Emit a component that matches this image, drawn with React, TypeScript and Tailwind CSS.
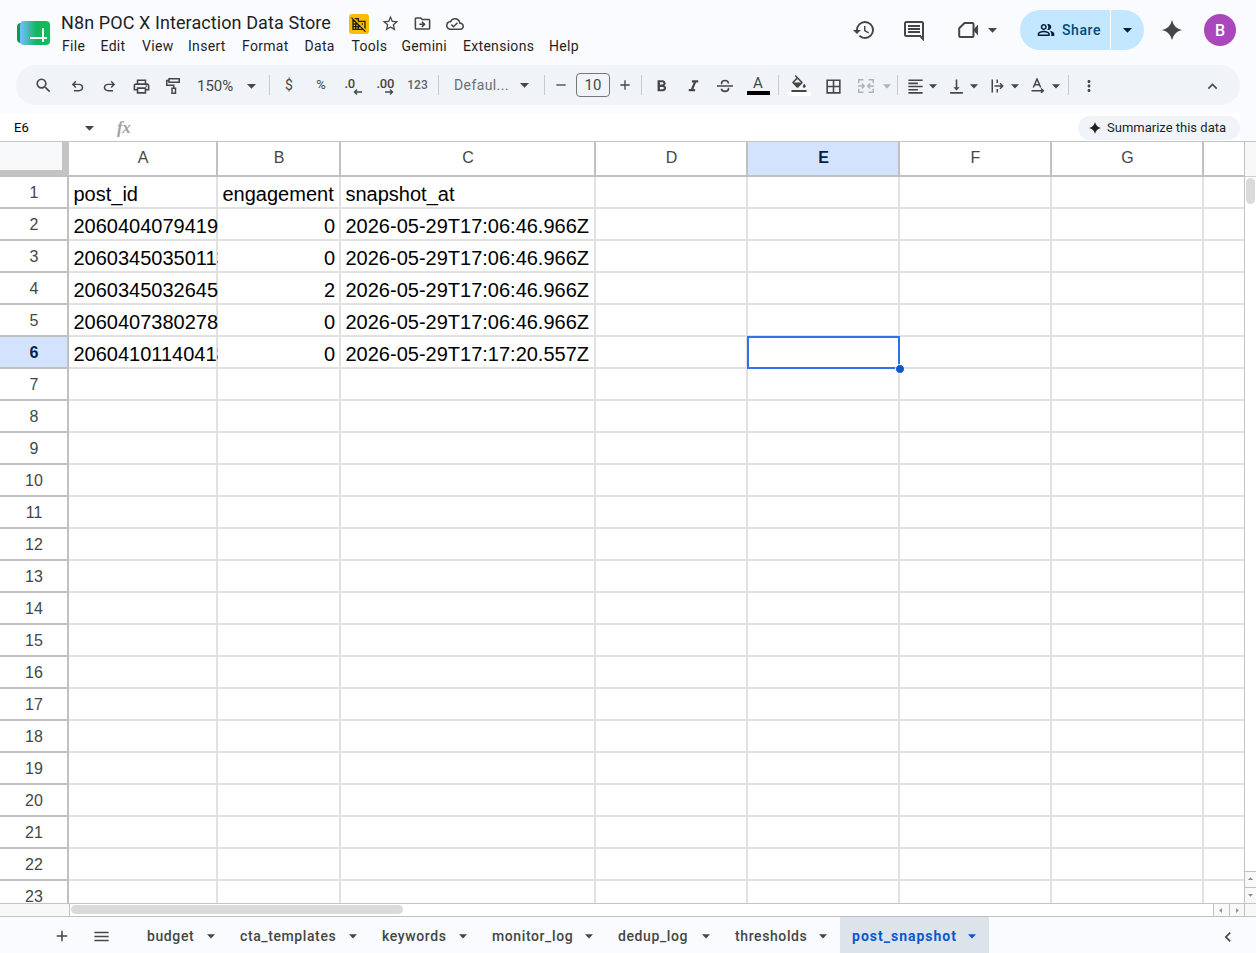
import type { ReactNode } from "react";
import {
  MdAdd,
  MdBorderAll,
  MdDomainDisabled,
  MdFormatAlignLeft,
  MdFormatBold,
  MdFormatColorFill,
  MdFormatItalic,
  MdHistory,
  MdKeyboardArrowLeft,
  MdKeyboardArrowUp,
  MdMenu,
  MdMoreVert,
  MdOutlineCloudDone,
  MdOutlineDriveFileMove,
  MdOutlinePeopleAlt,
  MdOutlinePrint,
  MdRemove,
  MdSearch,
  MdStarBorder,
  MdStrikethroughS,
  MdVerticalAlignBottom,
} from "react-icons/md";

const MENUS = [
  { label: "File", width: "w-[38.5px]" },
  { label: "Edit", width: "w-[41.5px]" },
  { label: "View", width: "w-[46px]" },
  { label: "Insert", width: "w-[54px]" },
  { label: "Format", width: "w-[62.5px]" },
  { label: "Data", width: "w-[47px]" },
  { label: "Tools", width: "w-[50px]" },
  { label: "Gemini", width: "w-[61.5px]" },
  { label: "Extensions", width: "w-[86px]" },
  { label: "Help", width: "w-[40px]" },
];

const COLUMNS = [
  { name: "A", width: "w-[149px]" },
  { name: "B", width: "w-[123px]" },
  { name: "C", width: "w-[255px]" },
  { name: "D", width: "w-[152px]" },
  { name: "E", width: "w-[152px]" },
  { name: "F", width: "w-[152px]" },
  { name: "G", width: "w-[152px]" },
];

const DATA = [
  ["post_id", "engagement", "snapshot_at"],
  ["2060404079419", "0", "2026-05-29T17:06:46.966Z"],
  ["20603450350113", "0", "2026-05-29T17:06:46.966Z"],
  ["2060345032645", "2", "2026-05-29T17:06:46.966Z"],
  ["2060407380278", "0", "2026-05-29T17:06:46.966Z"],
  ["20604101140418", "0", "2026-05-29T17:17:20.557Z"],
];

const TABS = [
  { name: "budget", width: "w-[93px]" },
  { name: "cta_templates", width: "w-[142px]" },
  { name: "keywords", width: "w-[110px]" },
  { name: "monitor_log", width: "w-[126px]" },
  { name: "dedup_log", width: "w-[117px]" },
  { name: "thresholds", width: "w-[117px]" },
  { name: "post_snapshot", width: "w-[149px]", active: true },
];

const SELECTED = { row: 6, col: "E" };

const Caret = ({ className = "" }: { className?: string }) => (
  <svg width="9" height="5" viewBox="0 0 9 5" className={`shrink-0 ${className}`}>
    <path d="M0 0h9L4.5 4.7z" fill="currentColor" />
  </svg>
);

const Spark = ({ size }: { size: number }) => (
  <svg width={size} height={size} viewBox="0 0 20 20" className="shrink-0">
    <path d="M10 0Q11.8 8.2 20 10Q11.8 11.8 10 20Q8.2 11.8 0 10Q8.2 8.2 10 0z" fill="currentColor" />
  </svg>
);

const SheetsLogo = () => (
  <svg width="34" height="26" viewBox="0 0 34 26">
    <defs>
      <linearGradient id="logo" x1="0" x2="1">
        <stop offset="0.05" stopColor="#6fbcfa" />
        <stop offset="0.55" stopColor="#12b65c" />
        <stop offset="1" stopColor="#10bd5b" />
      </linearGradient>
    </defs>
    <rect x="0" y="3" width="20" height="20" rx="4" fill="#0b9b50" />
    <rect x="3" y="1" width="30" height="24" rx="4" fill="url(#logo)" />
    <path d="M13 18h17M26 8v14" stroke="#fff" strokeWidth="2" />
  </svg>
);

const Sep = ({ className }: { className: string }) => (
  <div className={`h-5 w-px shrink-0 bg-[#c7c9cc] ${className}`} />
);

const Slot = ({ className = "w-8", children }: { className?: string; children: ReactNode }) => (
  <div className={`flex h-full shrink-0 items-center justify-center ${className}`}>{children}</div>
);

const Decimal = ({ text, right }: { text: string; right?: boolean }) => (
  <div className="flex w-[17px] flex-col leading-none">
    <span className="text-[13px] leading-[11px] font-medium tracking-[-0.3px]">{text}</span>
    <svg width="9" height="6" viewBox="0 0 9 6" className="self-end">
      <path
        d={right ? "M0 3h7.500M5 0.500L7.500 3L5 5.500" : "M9 3H1.500M4 0.500L1.500 3L4 5.500"}
        fill="none"
        stroke="currentColor"
        strokeWidth="1.4"
      />
    </svg>
  </div>
);

const Header = () => (
  <header className="flex h-[65px] shrink-0 items-start">
    <div className="mt-5 ml-[17px] w-[44px] shrink-0">
      <SheetsLogo />
    </div>
    <div className="w-[794px]">
      <div className="flex h-[37px] items-center pt-2.5">
        <h1 className="-mt-0.5 w-[288px] text-[18px] leading-6 tracking-[0.09px] whitespace-nowrap text-[#1f1f1f]">
          N8n POC X Interaction Data Store
        </h1>
        <div className="flex size-5 items-center justify-center rounded-[3px] bg-[#fbbc04] text-[#1f1f1f]">
          <MdDomainDisabled size={16} />
        </div>
        <MdStarBorder size={19} className="ml-3" />
        <MdOutlineDriveFileMove size={19} className="ml-[13px]" />
        <MdOutlineCloudDone size={18} className="ml-[14px]" />
      </div>
      <nav className="flex pl-px text-[14px] leading-[18px] tracking-[0.3px] text-[#1f1f1f]">
        {MENUS.map((m) => (
          <span key={m.label} className={`shrink-0 whitespace-nowrap ${m.width}`}>
            {m.label}
          </span>
        ))}
      </nav>
    </div>
    <div className="mt-2.5 flex h-10 items-center">
      <MdHistory size={24} className="-ml-[3px]" />
      <svg width="20" height="20" viewBox="0 0 20 20" className="mt-0.5 ml-[28px]">
        <path
          d="M19 18V2.500A1.500 1.500 0 0 0 17.500 1h-15A1.500 1.500 0 0 0 1 2.500v11A1.500 1.500 0 0 0 2.500 15h13.700z"
          fill="none"
          stroke="currentColor"
          strokeWidth="2"
        />
        <path d="M4 5h12M4 8h12M4 11h12" stroke="currentColor" strokeWidth="1.800" />
      </svg>
      <svg width="22" height="18" viewBox="0 0 22 18" className="ml-[34px]">
        <path
          d="M6.500 2h8a1 1 0 0 1 1 1v12a1 1 0 0 1-1 1H2.200a1 1 0 0 1-1-1V7.300z"
          fill="none"
          stroke="currentColor"
          strokeWidth="2"
          strokeLinejoin="round"
        />
        <path d="M15 9l5-5.500v11z" fill="currentColor" />
      </svg>
      <Caret className="ml-2" />
      <div className="ml-[23px] flex h-10 w-[124px] overflow-hidden rounded-full bg-[#c2e7ff] text-[#001d35]">
        <div className="flex w-[90px] items-center pl-[17px]">
          <MdOutlinePeopleAlt size={18} />
          <span className="ml-[7px] text-[14px] font-medium tracking-[0.6px] text-[#004a77]">Share</span>
        </div>
        <div className="w-px bg-white" />
        <div className="flex flex-1 items-center pl-[12px]">
          <Caret />
        </div>
      </div>
      <div className="ml-[18px]">
        <Spark size={20} />
      </div>
      <div className="ml-[22px] flex size-8 items-center justify-center rounded-full bg-[#ab47bc] pt-0.5 text-[16px] font-medium text-white">
        B
      </div>
    </div>
  </header>
);

const Toolbar = () => (
  <div className="mx-4 flex h-10 shrink-0 items-center rounded-full bg-[#f0f4f9] pl-2.5">
    <Slot className="w-[34px]"><MdSearch size={19} /></Slot>
    <Slot className="ml-px w-8 pt-0.5">
      <svg width="17" height="17" viewBox="0 -960 960 960" fill="currentColor">
        <path d="M280-200v-80h284q63 0 109.500-40T720-420q0-60-46.500-100T564-560H312l104 104-56 56-200-200 200-200 56 56-104 104h252q97 0 169.500 63T806-420q0 94-72.500 157T564-200H280Z" />
      </svg>
    </Slot>
    <Slot className="w-8 pt-0.5">
      <svg width="17" height="17" viewBox="0 -960 960 960" fill="currentColor">
        <path d="M396-200q-97 0-169.500-63T154-420q0-94 72.500-157T396-640h252L544-744l56-56 200 200-200 200-56-56 104-104H396q-63 0-109.500 40T240-420q0 60 46.500 100T396-280h284v80H396Z" />
      </svg>
    </Slot>
    <Slot className="w-8 pt-0.5"><MdOutlinePrint size={19} /></Slot>
    <Slot className="w-[31px] pt-0.5">
      <svg width="16" height="18" viewBox="0 0 16 18" fill="none" stroke="currentColor" strokeWidth="1.500">
        <path d="M4 1.750h10.250v3.500H4zM4 3.500H1.750v4.750h7v3M7 11.250h3.500v5H7z" />
      </svg>
    </Slot>
    <span className="w-[56px] pt-0.5 pl-[9px] text-[15px]">150%</span>
    <Slot className="w-4 pt-0.5 pr-px"><Caret /></Slot>
    <Sep className="mr-[3px] ml-[9px]" />
    <Slot><span className="text-[14px]">$</span></Slot>
    <Slot><span className="text-[13px]">%</span></Slot>
    <Slot className="w-8 pt-0.5"><Decimal text=".0" /></Slot>
    <Slot className="w-8 pt-0.5"><Decimal text=".00" right /></Slot>
    <Slot className="w-[33px]"><span className="text-[12px] font-medium text-[#5f6368]">123</span></Slot>
    <Sep className="ml-1" />
    <span className="w-[76px] pl-[15px] text-[14px] tracking-[0.4px] text-[#6b6e70]">Defaul...</span>
    <Slot className="w-5 pr-px"><Caret /></Slot>
    <Sep className="ml-[9px]" />
    <Slot className="w-[31px]"><MdRemove size={16} /></Slot>
    <div className="flex h-6 w-[34px] items-center justify-center rounded-[4px] border border-[#747775] text-[15px]">10</div>
    <Slot className="w-[30px]"><MdAdd size={16} /></Slot>
    <Sep className="ml-px" />
    <Slot className="ml-[3px] w-8 pt-0.5"><MdFormatBold size={19} /></Slot>
    <Slot className="w-8 pt-0.5"><MdFormatItalic size={19} /></Slot>
    {/* Strikethrough: curved S broken by a thin bar */}
    <Slot className="w-8 pt-0.5">
      <svg width="16" height="14" viewBox="0 0 16 14" fill="none" stroke="currentColor" strokeWidth="1.600">
        <path d="M0 7h16M11.500 4.500C11.300 2.500 10 1.500 8 1.500S4.600 2.600 4.600 4.200q0 .5.200.9M4.300 9.800c.4 1.700 1.700 2.600 3.700 2.600s3.500-1 3.500-2.600q0-.5-.2-.9" />
      </svg>
    </Slot>
    <Slot className="w-[34px]">
      <div className="flex flex-col items-center">
        <span className="text-[15px] leading-[15px]">A</span>
        <div className="h-1 w-[23px] bg-black" />
      </div>
    </Slot>
    <Sep className="ml-[3px]" />
    <Slot className="ml-1 w-8">
      <div className="flex flex-col items-center">
        <MdFormatColorFill size={18} className="-mb-px" />
        <div className="h-1 w-[23px] bg-white" />
      </div>
    </Slot>
    <Slot className="w-9 pt-0.5"><MdBorderAll size={19} /></Slot>
    <Slot className="w-[30px] pt-0.5 text-[#b0b3b6]">
      <svg width="16" height="14" viewBox="0 0 16 14" fill="none" stroke="currentColor" strokeWidth="1.500">
        <path d="M5.500 0.750H0.750v3.500M0.750 9.750v3.500H5.500M10.500 0.750h4.750v3.500M15.250 9.750v3.500h-4.750M0 7h6M3.800 4.500L6.200 7L3.800 9.500M16 7h-6M12.200 4.500L9.800 7l2.400 2.500" />
      </svg>
    </Slot>
    <Slot className="w-3 pt-0.5 text-[#b0b3b6]"><Caret className="w-2" /></Slot>
    <Sep className="ml-1" />
    <Slot className="ml-[5px] w-6 pt-0.5"><MdFormatAlignLeft size={19} /></Slot>
    <Slot className="w-[13px] pt-0.5 pr-px"><Caret className="w-2" /></Slot>
    <Slot className="ml-1 w-6 pt-0.5"><MdVerticalAlignBottom size={19} /></Slot>
    <Slot className="w-3 pt-0.5"><Caret className="w-2" /></Slot>
    <Slot className="ml-[5px] w-6 pt-0.5">
      <svg width="13" height="14" viewBox="0 0 13 14" fill="none" stroke="currentColor" strokeWidth="1.500">
        <path d="M1.250 0.500v13M6.250 0.500v3.500M6.250 10v3.500M3.500 7h8M9 4.300L11.700 7L9 9.700" />
      </svg>
    </Slot>
    <Slot className="w-3 pt-0.5"><Caret className="w-2" /></Slot>
    <Slot className="ml-[5px] w-6">
      <svg width="14" height="15" viewBox="0 0 14 15" fill="none" stroke="currentColor" strokeWidth="1.500">
        <path d="M2.300 9.500L6 1l3.700 8.500M3.500 6.800h5M0.500 12.700h11.500M10 10.500l2.300 2.200L10 14.900" />
      </svg>
    </Slot>
    <Slot className="w-3 pt-0.5"><Caret className="w-2" /></Slot>
    <Sep className="ml-1.5" />
    <Slot className="ml-1 w-8 pt-0.5"><MdMoreVert size={18} /></Slot>
    <Slot className="mr-3 ml-auto w-8 pt-0.5"><MdKeyboardArrowUp size={19} /></Slot>
  </div>
);

const FormulaBar = () => (
  <div className="mt-2 flex h-7 w-[1240px] shrink-0 items-center bg-white">
    <span className="w-[85px] pt-0.5 pl-3.5 text-[13px] text-black">E6</span>
    <Caret className="mt-0.5" />
    <span className="mt-px ml-[23px] font-['Liberation_Serif',serif] text-[17px] font-bold tracking-[-0.5px] text-[#a0a2a4] italic">
      fx
    </span>
    <div className="mt-0.5 ml-auto flex h-6 w-[162px] items-center rounded-full bg-[#f0f4f9] pl-[11px] text-[#1f1f1f]">
      <Spark size={12} />
      <span className="ml-1.5 text-[13px] whitespace-nowrap">Summarize this data</span>
    </div>
  </div>
);

const Cell = ({ row, col }: { row: number; col: number }) => {
  const { name, width } = COLUMNS[col];
  const text = DATA[row - 1]?.[col];
  const alignRight = name === "B" && row > 1;
  const selected = row === SELECTED.row && name === SELECTED.col;
  return (
    <div
      className={`relative h-8 shrink-0 border-r-2 border-b-2 border-[#e1e1e1] bg-white ${width}`}
    >
      {text && (
        <div
          className={`-mr-0.5 overflow-hidden pt-0.5 pl-[4.5px] text-[20px] leading-[31px] whitespace-nowrap text-black ${
            alignRight ? "text-right" : ""
          } ${name === "A" ? "" : "pr-1.5"}`}
        >
          {text}
        </div>
      )}
      {selected && (
        <div className="absolute -top-px -right-[2px] -bottom-[2px] -left-px z-10 border-2 border-[#3271ea]">
          <div className="absolute -right-[7px] -bottom-[7px] size-2.5 rounded-full border border-white bg-[#0b57d0]" />
        </div>
      )}
    </div>
  );
};

const Grid = () => (
  <div className="flex h-[763px] shrink-0 border-t border-b border-[#c4c4c4] bg-white font-['Liberation_Sans',Arial,sans-serif]">
    <div className="flex w-[1244px] flex-col overflow-hidden">
      <div className="flex h-[35px] shrink-0 border-b-2 border-[#c0c0c0] text-[16px] text-[#444746]">
        <div className="w-[69px] shrink-0 border-r-2 border-[#c4c4c4]">
          <div className="h-full border-r-[5px] border-b-[5px] border-[#c4c4c4] bg-[#f8f9fa]" />
        </div>
        {COLUMNS.map((c) => (
          <div
            key={c.name}
            className={`shrink-0 border-r-2 border-[#c0c0c0] pl-px text-center leading-[31px] ${c.width} ${
              c.name === SELECTED.col ? "bg-[#d3e3fd] font-bold text-[#041e49]" : ""
            }`}
          >
            {c.name}
          </div>
        ))}
      </div>
      {Array.from({ length: 23 }, (_, i) => i + 1).map((row) => (
        <div key={row} className="flex h-8 shrink-0">
          <div
            className={`w-[69px] shrink-0 border-r-2 border-b-2 border-[#c0c0c0] pl-px text-center text-[16px] leading-[31px] ${
              row === SELECTED.row ? "bg-[#d3e3fd] font-bold text-[#041e49]" : "text-[#444746]"
            }`}
          >
            {row}
          </div>
          {COLUMNS.map((c, col) => (
            <Cell key={c.name} row={row} col={col} />
          ))}
          <div className="flex-1 border-b-2 border-[#e1e1e1]" />
        </div>
      ))}
    </div>

    {/* Vertical scrollbar */}
    <div className="flex w-3 flex-col border-l border-[#c0c0c0]">
      <div className="h-[35px] border-b border-[#d0d0d0] bg-[#f8f8f8]" />
      <div className="mt-px ml-px h-[26px] w-[9px] rounded-full bg-[#dadada]" />
      <div className="mt-auto flex h-4 items-center justify-center border-t border-[#c0c0c0] bg-[#f8f8f8] pb-0.5 text-[#8a8a8a]">
        <Caret className="h-[3px] w-[5px] rotate-180" />
      </div>
      <div className="flex h-4 items-center justify-center border-t border-[#c0c0c0] bg-[#f8f8f8] text-[#8a8a8a]">
        <Caret className="h-[3px] w-[5px]" />
      </div>
    </div>
  </div>
);

const HorizontalScroll = () => (
  <div className="flex h-[13px] shrink-0 border-b border-[#c0c0c0] bg-white">
    <div className="w-[70px] border-r border-[#c0c0c0] bg-[#f8f8f8]" />
    <div className="mt-px ml-px h-[9px] w-[332px] rounded-full bg-[#dadada]" />
    <div className="ml-auto flex w-4 items-center justify-center border-l border-[#c0c0c0] bg-[#f8f8f8] pr-0.5 text-[#8a8a8a]">
      <Caret className="h-[3px] w-[5px] rotate-90" />
    </div>
    <div className="flex w-[15px] items-center justify-center border-l border-[#c0c0c0] bg-[#f8f8f8] text-[#8a8a8a]">
      <Caret className="h-[3px] w-[5px] -rotate-90" />
    </div>
    <div className="w-3 border-l border-[#c0c0c0] bg-[#f8f8f8]" />
  </div>
);

const SheetTabs = () => (
  <footer className="flex h-9 shrink-0 items-center">
    <Slot className="ml-[42px] w-10 pt-0.5"><MdAdd size={18} /></Slot>
    <Slot className="w-10 pt-0.5 pr-px"><MdMenu size={19} /></Slot>
    <div className="ml-[13px] flex h-full">
      {TABS.map((tab) => (
        <div
          key={tab.name}
          className={`flex items-center justify-between pt-0.5 pr-[13px] pl-3 text-[14px] ${tab.width} ${
            tab.active ? "bg-[#dde3ea] font-bold tracking-[1px] text-[#0b57d0]" : "font-medium tracking-[0.6px]"
          }`}
        >
          <span>{tab.name}</span>
          <Caret className="w-2 shrink-0" />
        </div>
      ))}
    </div>
    <Slot className="mr-3 ml-auto w-8 pt-1"><MdKeyboardArrowLeft size={20} /></Slot>
  </footer>
);

export default function App() {
  return (
    <div className="flex h-[953px] w-[1256px] flex-col overflow-hidden bg-[#f9fbff] font-[Roboto,sans-serif] text-[#444746]">
      <Header />
      <Toolbar />
      <FormulaBar />
      <Grid />
      <HorizontalScroll />
      <SheetTabs />
    </div>
  );
}
